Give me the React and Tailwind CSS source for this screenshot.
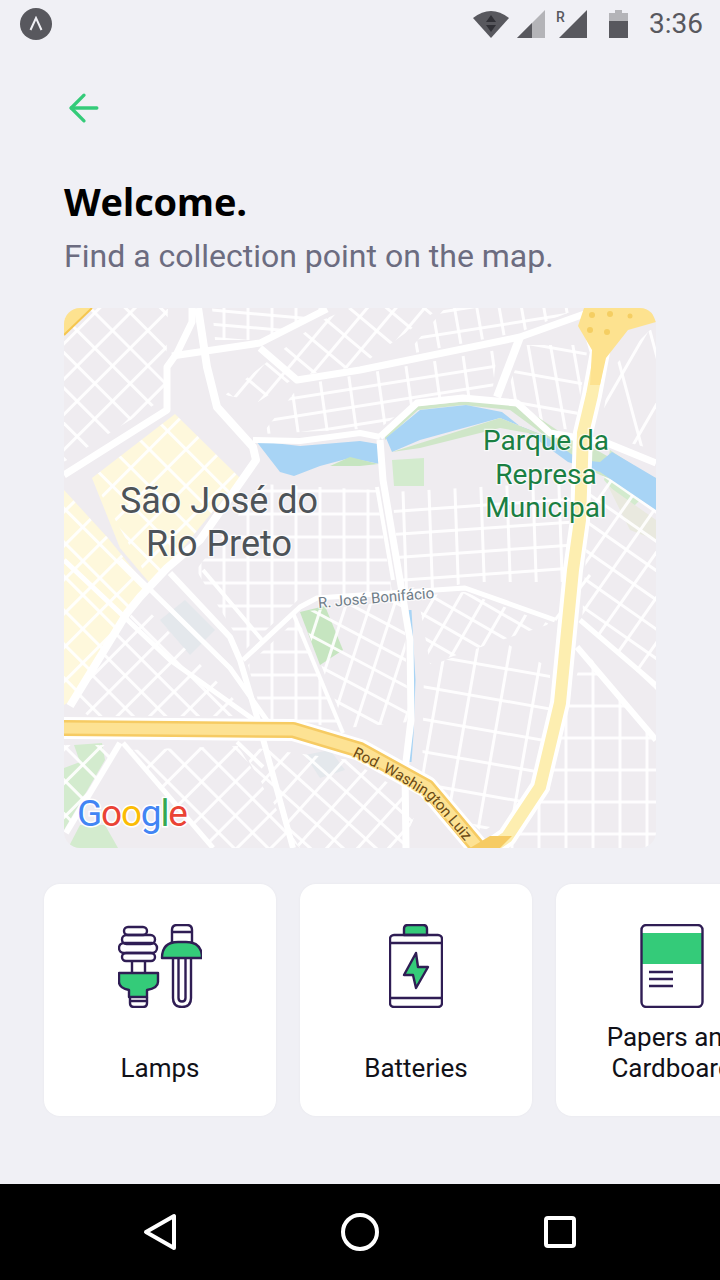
import React from "react";
import { ArrowLeft } from "lucide-react";

const INK = "#2f1d54";
const GREEN = "#34cb79";

// small street blocks on the map: a clip polygon, and two sets of parallel streets
const blocks = [
  { p: "64,308 168,308 165,398 64,462", a: 45, s: 25, b: 135, t: 25 },
  { p: "212,308 330,308 262,340 215,340", a: 90, s: 24, b: 5, t: 14 },
  { p: "225,395 318,322 350,308 440,308 360,366 298,376 258,402", a: 40, s: 24, b: 130, t: 22 },
  { p: "445,308 580,308 520,332 405,355", a: 80, s: 22, b: -9, t: 22 },
  { p: "300,385 497,350 492,397 417,400 380,428 262,434", a: -9, s: 18, b: 82, t: 29 },
  { p: "525,345 588,345 575,430 552,428 505,395", a: 80, s: 22, b: 10, t: 30 },
  { p: "610,370 650,330 656,330 656,450 600,435", a: 75, s: 38, b: 120, t: 45 },
  { p: "392,492 570,482 568,582 470,582 402,598", a: -4, s: 23, b: 88, t: 26 },
  { p: "262,484 376,490 392,592 300,598 245,650 196,570", a: 0, s: 23, b: 90, t: 24 },
  { p: "418,596 465,592 550,624 430,664", a: 30, s: 20, b: 120, t: 22 },
  { p: "424,668 500,640 550,668 550,790 482,832 422,782", a: 10, s: 32, b: 100, t: 32 },
  { p: "72,700 140,602 250,716 88,716", a: 45, s: 23, b: 135, t: 23 },
  { p: "248,665 298,618 340,726 264,722", a: 0, s: 23, b: 90, t: 24 },
  { p: "300,612 404,600 408,722 346,728", a: 28, s: 23, b: 108, t: 23 },
  { p: "130,750 238,746 300,848 212,848", a: 45, s: 24, b: 135, t: 24 },
  { p: "240,746 350,760 420,802 402,848 300,848", a: 42, s: 22, b: 132, t: 23 },
  { p: "585,650 656,745 656,848 510,848 555,742", a: 90, s: 27, b: 0, t: 32 },
  { p: "592,455 656,480 656,690 582,620", a: 35, s: 24, b: 125, t: 26 },
  { p: "92,478 175,414 240,478 152,586", a: 45, s: 26, b: 135, t: 26 },
  { p: "64,490 108,538 150,590 112,632 80,695 64,705", a: 45, s: 24, b: 135, t: 24 },
  { p: "64,745 118,745 70,830 64,830", a: 45, s: 24, b: 135, t: 24 },
];

function streetLines(angle, step) {
  const rad = (angle * Math.PI) / 180;
  const dx = Math.cos(rad);
  const dy = Math.sin(rad);
  const lines = [];
  for (let d = -800; d <= 800; d += step) {
    const cx = 360 - dy * d;
    const cy = 578 + dx * d;
    lines.push([cx - dx * 800, cy - dy * 800, cx + dx * 800, cy + dy * 800]);
  }
  return lines;
}

// main roads, drawn white over the blocks
const roads = [
  ["64,475 167,410 167,367 177,353 192,322 192,308", 7],
  ["198,308 207,367 217,407 253,447 256,460 235,490 200,540 167,568 140,597 127,613 70,706", 8],
  ["172,356 260,343 327,309", 7],
  ["260,348 297,380 360,370 520,337 590,312", 7],
  ["520,337 497,397", 8],
  ["380,437 417,403 463,398 517,403 550,433 607,443 656,463", 7],
  ["253,440 300,441 360,433 380,437", 6],
  ["380,440 383,480 400,580 410,640 411,720 405,770 406,848", 7],
  ["377,487 393,580", 4],
  ["64,560 170,660 257,722", 5],
  ["120,560 230,668 268,722", 5],
  ["170,573 230,637 240,660 257,717 293,848", 6],
  ["203,570 262,640", 4],
  ["243,660 300,607 317,598 465,588 555,620", 5],
  ["293,613 343,733", 4],
  ["120,743 66,833", 6],
  ["123,743 213,848", 5],
  ["237,742 263,767", 4],
  ["577,647 656,740", 6],
  ["580,620 656,685", 5],
  ["555,620 590,575", 3],
];

const HIGHWAY_V = "590,318 600,352 592,395 583,433 580,520 573,570 560,703 540,787 507,837 488,850";
const HIGHWAY_H = "60,728 293,730 360,750 427,787 480,850";

function MapView() {
  return (
    <svg viewBox="64 308 592 540" className="block w-[592px] h-[540px] rounded-2xl" style={{ fontFamily: "Roboto, sans-serif" }}>
      <defs>
        {blocks.map((b, i) => (
          <clipPath key={i} id={`block-${i}`}>
            <polygon points={b.p} />
          </clipPath>
        ))}
        <path id="rod-path" d="M352 756 L390 775 L428 798 L452 826 L474 852" />
      </defs>
      <rect x="64" y="308" width="592" height="540" fill="#efecf0" />

      {/* yellow built-up zone */}
      <polygon points="92,478 175,414 240,478 152,586 120,548" fill="#fef8dc" />
      <polygon points="64,490 108,538 150,590 112,632 80,695 64,705" fill="#fef8dc" />

      {/* greens and grey patches */}
      <polygon points="64,768 80,762 74,745 102,743 105,760 64,830" fill="#d3ebce" />
      <polygon points="68,848 80,825 105,825 118,848" fill="#d3ebce" />
      <polygon points="392,460 424,458 424,486 394,486" fill="#d3ebce" />
      <polygon points="300,612 325,606 343,650 320,665" fill="#c6e5c0" />
      <polygon points="160,620 185,600 215,630 190,655" fill="#e4e8ec" />
      <polygon points="305,755 330,750 345,770 320,778" fill="#e4e8ec" />
      <polygon points="610,450 640,470 650,490 630,510 604,480" fill="#d3ebce" />
      <polygon points="608,486 656,520 656,540 630,530" fill="#e9e9df" />

      {blocks.map((b, i) => (
        <g key={i} clipPath={`url(#block-${i})`} stroke="#ffffff" strokeWidth="3" strokeOpacity="0.9">
          {[...streetLines(b.a, b.s), ...streetLines(b.b, b.t)].map((l, j) => (
            <line key={j} x1={l[0]} y1={l[1]} x2={l[2]} y2={l[3]} />
          ))}
        </g>
      ))}

      {/* water */}
      <polygon points="385,440 418,410 463,405 510,410 540,432 575,462 600,475 640,490 656,505 656,478 625,466 600,452 560,432 530,412 505,402 460,402 418,406 385,435" fill="#cfe6c8" />
      <polygon points="386,438 420,410 466,405 502,412 535,438 568,462 600,472 656,510 656,478 612,452 600,462 580,460 545,436 500,418 420,440 392,452" fill="#a8d4f5" />
      <polygon points="392,452 500,418 545,436 500,428 420,448" fill="#cfe6c8" />
      <polygon points="256,441 300,446 360,441 378,444 380,464 350,458 320,466 294,476 280,472" fill="#a8d4f5" />
      <polygon points="330,466 350,457 378,464 360,466" fill="#c6e5c0" />
      <polyline points="410,610 414,680 412,735 410,762" fill="none" stroke="#a8d4f5" strokeWidth="3" />

      {roads.map(([pts, w], i) => (
        <polyline key={i} points={pts} fill="none" stroke="#ffffff" strokeWidth={w} strokeLinejoin="round" />
      ))}

      {/* highways */}
      <polyline points={HIGHWAY_V} fill="none" stroke="#ffffff" strokeWidth="20" strokeLinejoin="round" />
      <polyline points={HIGHWAY_V} fill="none" stroke="#fdeeb0" strokeWidth="12" strokeLinejoin="round" />
      <polygon points="584,308 650,308 656,322 628,330 606,358 600,385 590,385 592,350 578,326" fill="#fde28f" />
      <g fill="#f5ce62">
        <circle cx="590" cy="330" r="3" />
        <circle cx="607" cy="332" r="3" />
        <circle cx="610" cy="314" r="3" />
        <circle cx="592" cy="315" r="3" />
        <circle cx="630" cy="316" r="2.5" />
      </g>
      <polygon points="64,308 92,308 64,335" fill="#fde28f" />
      <polyline points="64,335 92,308" fill="none" stroke="#f5c650" strokeWidth="2" />
      <polyline points={HIGHWAY_H} fill="none" stroke="#ffffff" strokeWidth="22" strokeLinejoin="round" />
      <polyline points={HIGHWAY_H} fill="none" stroke="#f6cb63" strokeWidth="16" strokeLinejoin="round" />
      <polyline points={HIGHWAY_H} fill="none" stroke="#fde293" strokeWidth="11" strokeLinejoin="round" />
      <polygon points="470,848 490,836 512,836 500,848" fill="#f6cb63" />

      {/* labels */}
      <g stroke="#ffffff" strokeOpacity="0.7" strokeWidth="2.5" style={{ paintOrder: "stroke" }} textAnchor="middle">
        <text x="219" y="513" fontSize="36" fill="#4d5358">São José do</text>
        <text x="219" y="556" fontSize="36" fill="#4d5358">Rio Preto</text>
        <text x="546" y="450" fontSize="28" fill="#1a7f43">Parque da</text>
        <text x="546" y="484" fontSize="28" fill="#1a7f43">Represa</text>
        <text x="546" y="517" fontSize="28" fill="#1a7f43">Municipal</text>
        <text x="376" y="603" fontSize="15" fill="#6f7d88" transform="rotate(-5 376 598)">R. José Bonifácio</text>
      </g>
      <text fontSize="15" fill="#6b4a14" stroke="#fde293" strokeWidth="2" style={{ paintOrder: "stroke" }}>
        <textPath href="#rod-path">Rod. Washington Luiz</textPath>
      </text>
      <text x="77" y="826" fontSize="37" stroke="#ffffff" strokeWidth="3" style={{ paintOrder: "stroke" }} letterSpacing="-1.2">
        <tspan fill="#4285f4">G</tspan>
        <tspan fill="#ea4335">o</tspan>
        <tspan fill="#fbbc05">o</tspan>
        <tspan fill="#4285f4">g</tspan>
        <tspan fill="#34a853">l</tspan>
        <tspan fill="#ea4335">e</tspan>
      </text>
    </svg>
  );
}

function LampsIcon() {
  return (
    <svg viewBox="118 924 84 84" className="w-[84px] h-[84px]" fill="none" stroke={INK} strokeWidth="2.4" strokeLinejoin="round">
      <rect x="124" y="927" width="23" height="8" rx="4" />
      <rect x="122" y="935" width="33" height="9" rx="4.5" />
      <rect x="119" y="943" width="38" height="10" rx="5" />
      <rect x="122" y="953" width="33" height="8" rx="4" />
      <path d="M132 961V973M145 961V973" />
      <path d="M119 973H158V982Q158 988 147 990V997H129V990Q119 988 119 982Z" fill={GREEN} />
      <path d="M130 997V1003Q130 1007 134 1007H143Q147 1007 147 1003V997M130 1001H147" />
      <path d="M172 942V930Q172 925 177 925H187Q192 925 192 930V942M172 932H192" />
      <path d="M162 958Q162 942 178 942H186Q202 942 202 958Z" fill={GREEN} />
      <path d="M173 958V998Q173 1007 182 1007Q191 1007 191 998V958" />
      <path d="M178.500 958V998Q178.500 1001.500 182 1001.500Q185.500 1001.500 185.500 998V958" />
    </svg>
  );
}

function BatteryIcon() {
  return (
    <svg viewBox="389 924 54 84" className="w-[54px] h-[84px]" fill="none" stroke={INK} strokeWidth="2.4" strokeLinejoin="round">
      <path d="M404 935V929Q404 925 408 925H423Q427 925 427 929V935Z" fill={GREEN} />
      <rect x="390" y="935" width="52" height="72" rx="4" />
      <path d="M390 943H442M390 998H442" />
      <path d="M416 953L404 975H413L416 988L428 967H418Z" fill={GREEN} />
    </svg>
  );
}

function PaperIcon() {
  return (
    <svg viewBox="640 924 64 84" className="w-[64px] h-[84px]" fill="none" stroke={INK} strokeWidth="2.4">
      <rect x="642" y="933" width="60" height="31" fill={GREEN} stroke="none" />
      <rect x="641.500" y="925" width="61" height="82" rx="5" />
      <path d="M649 972H673M649 979H673M649 986H673" />
    </svg>
  );
}

function Card({ icon, label }) {
  return (
    <div className="shrink-0 w-[232px] h-[232px] bg-white rounded-2xl pt-10 pb-8 flex flex-col items-center justify-between shadow-[0_0_3px_rgba(0,0,0,0.04)]">
      {icon}
      <p className="text-center text-[26px] leading-[31px] text-[#111118] font-['Roboto',sans-serif]">{label}</p>
    </div>
  );
}

export default function App() {
  return (
    <div className="w-[720px] h-[1280px] flex flex-col overflow-hidden bg-[#f0f0f5] font-['Roboto',sans-serif]">
      <div className="h-12 shrink-0 flex items-center pl-5 pr-[17px]">
        <div className="w-8 h-8 rounded-full bg-[#58585e] flex items-center justify-center">
          <svg width="16" height="16" viewBox="0 0 16 16" fill="none" stroke="#f0f0f5" strokeWidth="2">
            <path d="M2.500 14L8 2L13.500 14" />
          </svg>
        </div>
        <div className="flex-1" />
        <svg width="36" height="28" viewBox="0 0 36 28" className="mr-[8px]">
          <path d="M18 28L0 8Q18 -6 36 8Z" fill="#58585e" />
          <path d="M18 5L23 12H13Z M18 22L13 15H23Z" fill="#303036" />
        </svg>
        <svg width="28" height="28" viewBox="0 0 28 28" className="mr-[11px]">
          <path d="M28 0V28H0Z" fill="#b4b4b8" />
          <path d="M15 13V28H0Z" fill="#58585e" />
        </svg>
        <div className="relative w-[31px] h-7 mr-[22px]">
          <svg width="28" height="28" viewBox="0 0 28 28" className="absolute right-0 top-0">
            <path d="M28 0V28H0Z" fill="#58585e" />
          </svg>
          <span className="absolute left-0 -top-[2px] text-[14px] leading-[18px] font-medium text-[#58585e]">R</span>
        </div>
        <svg width="19" height="28" viewBox="0 0 19 28" className="mr-[21px]">
          <path d="M6 0H13V3H19V11H0V3H6Z" fill="#b4b4b8" />
          <rect y="11" width="19" height="17" fill="#58585e" />
        </svg>
        <span className="text-[28px] leading-8 text-[#58585e]">3:36</span>
      </div>

      <div className="ml-[62px] mt-[38px] h-11 shrink-0 text-[#34cb79]">
        <ArrowLeft size={44} strokeWidth={1.8} />
      </div>

      <div className="px-16 mt-[47px] shrink-0">
        <h1 className="text-[38px] leading-[48px] font-bold text-black font-['Open_Sans',sans-serif] tracking-[-0.2px]">Welcome.</h1>
        <p className="mt-[11px] text-[32px] leading-[40px] text-[#6c6c80]">Find a collection point on the map.</p>
      </div>

      <div className="mx-16 mt-[32px] shrink-0">
        <MapView />
      </div>

      <div className="mt-9 ml-11 flex gap-6 shrink-0">
        <Card icon={<LampsIcon />} label="Lamps" />
        <Card icon={<BatteryIcon />} label="Batteries" />
        <Card icon={<PaperIcon />} label={<>Papers and<br />Cardboard</>} />
      </div>

      <div className="mt-auto h-24 shrink-0 bg-black flex items-center justify-center gap-[120px]">
        <svg width="80" height="48" viewBox="0 0 80 48" fill="none" stroke="#ffffff" strokeWidth="4" strokeLinejoin="round">
          <path d="M54 8V40L26 24Z" />
        </svg>
        <svg width="80" height="48" viewBox="0 0 80 48" fill="none" stroke="#ffffff" strokeWidth="4">
          <circle cx="40" cy="24" r="17" />
        </svg>
        <svg width="80" height="48" viewBox="0 0 80 48" fill="none" stroke="#ffffff" strokeWidth="4">
          <rect x="26" y="10" width="28" height="28" rx="2" />
        </svg>
      </div>
    </div>
  );
}
